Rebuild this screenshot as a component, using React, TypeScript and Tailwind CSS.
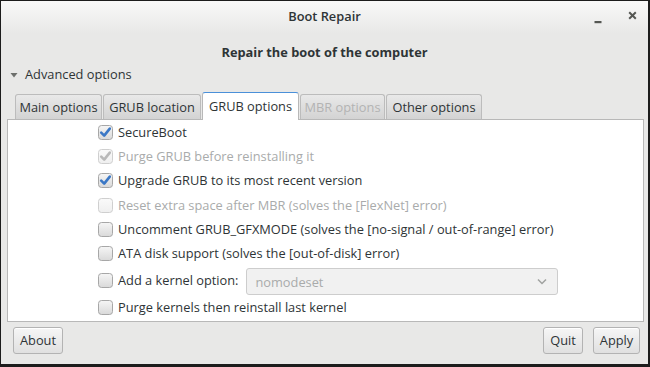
import React from "react";

const font = { fontFamily: '"Open Sans", "Noto Sans", sans-serif' };

function Check({ checked, disabled }: { checked?: boolean; disabled?: boolean }) {
  const id = disabled ? "gd" : "gn";
  return (
    <svg width="15" height="15" viewBox="0 0 15 15" className="shrink-0">
      <defs>
        <linearGradient id={id} x1="0" y1="0" x2="0" y2="1">
          <stop offset="0" stopColor={disabled ? "#fafafa" : "#f6f6f6"} />
          <stop offset="1" stopColor={disabled ? "#efefef" : "#d9d9d9"} />
        </linearGradient>
      </defs>
      <rect x="0.5" y="0.5" width="14" height="14" rx="3" fill={`url(#${id})`} stroke={disabled ? "#cfcfcf" : "#a7a7a7"} />
      {checked && (
        <path
          d="M3.2 7.6 L6.2 10.6 L11.8 3.6"
          fill="none"
          stroke={disabled ? "#b9b9b9" : "#3b78c6"}
          strokeWidth="2.6"
          strokeLinecap="round"
          strokeLinejoin="round"
        />
      )}
    </svg>
  );
}

function Row({ label, checked, disabled, h = "h-[24.4px]" }: { label: string; checked?: boolean; disabled?: boolean; h?: string }) {
  return (
    <div className={`flex items-center gap-[5px] ${h}`}>
      <Check checked={checked} disabled={disabled} />
      <span className={disabled ? "text-[#a9abab]" : "text-[#2e3436]"}>{label}</span>
    </div>
  );
}

function Tab({ label, w, active, disabled }: { label: string; w: string; active?: boolean; disabled?: boolean }) {
  if (active) {
    return (
      <div className={`${w} h-[28px] -mb-px relative z-10 flex items-center justify-center bg-white border border-b-0 border-[#b8b8b8] border-t-[#4a90d9] rounded-t-[3px] text-[#2e3436]`}>
        {label}
      </div>
    );
  }
  return (
    <div
      className={`${w} h-[25px] flex items-center justify-center border border-b-0 border-[#bcbcbc] rounded-t-[3px] bg-gradient-to-b from-[#e9e9e9] to-[#d3d3d3] ${disabled ? "text-[#b3b3b3]" : "text-[#2e3436]"}`}
    >
      {label}
    </div>
  );
}

function Button({ label, w }: { label: string; w: string }) {
  return (
    <div className={`${w} h-[27px] flex items-center justify-center rounded-[3px] border border-[#b3b3b3] bg-gradient-to-b from-[#f6f6f6] to-[#e0e0e0] text-[#2e3436] shadow-[inset_0_1px_0_#ffffff]`}>
      {label}
    </div>
  );
}

export default function App() {
  return (
    <div className="w-[650px] h-[367px] bg-[#1c1c1c] pt-px pl-px pr-[2px] pb-[3px] text-[12.8px] leading-[17px]" style={font}>
      <div className="w-full h-full flex flex-col bg-[#e8e8e7]">
        {/* Title bar */}
        <div className="h-[33px] shrink-0 grid grid-cols-[1fr_auto_1fr] items-center bg-gradient-to-b from-[#f8f8f8] to-[#e8e8e7]">
          <div />
          <div className="font-semibold text-[#2e3436] -mt-[2px]">Boot Repair</div>
          <div className="flex justify-end items-center gap-[26px] pr-[11px]">
            <svg width="8" height="8" viewBox="0 0 8 8" className="mt-[5px]">
              <rect x="0.5" y="5" width="7" height="2.2" fill="#555753" />
            </svg>
            <svg width="9" height="9" viewBox="0 0 9 9" className="-mt-[4px]">
              <path d="M1.2 1.2 L7.8 7.8 M7.8 1.2 L1.2 7.8" stroke="#555753" strokeWidth="2" />
            </svg>
          </div>
        </div>

        {/* Heading */}
        <div className="text-center font-bold text-[#2e3436] mt-[10px] h-[17px]">Repair the boot of the computer</div>

        {/* Expander */}
        <div className="flex items-center gap-[7px] pl-[9px] mt-[5px] h-[17px] text-[#2e3436]">
          <svg width="8" height="8" viewBox="0 0 8 8">
            <path d="M0.5 2 L7.5 2 L4 6.5 Z" fill="#6d6f6c" />
          </svg>
          <span>Advanced options</span>
        </div>

        {/* Notebook */}
        <div className="ml-[6px] mr-[4px] mt-[8px] flex flex-col">
          <div className="flex items-end pl-[8px] gap-px h-[28px]">
            <Tab label="Main options" w="w-[87px]" />
            <Tab label="GRUB location" w="w-[98px]" />
            <Tab label="GRUB options" w="w-[97px]" active />
            <Tab label="MBR options" w="w-[85px]" disabled />
            <Tab label="Other options" w="w-[96px]" />
          </div>
          <div className="h-[203px] bg-white border border-[#b8b8b8] pl-[90px] pr-[85px] flex flex-col">
            <Row label="SecureBoot" checked />
            <Row label="Purge GRUB before reinstalling it" checked disabled />
            <Row label="Upgrade GRUB to its most recent version" checked />
            <Row label="Reset extra space after MBR (solves the [FlexNet] error)" disabled />
            <Row label="Uncomment GRUB_GFXMODE (solves the [no-signal / out-of-range] error)" />
            <Row label="ATA disk support (solves the [out-of-disk] error)" />
            <div className="flex items-center gap-[5px] h-[29px]">
              <Check />
              <span className="text-[#2e3436] whitespace-nowrap">Add a kernel option:</span>
              <div className="ml-[3px] flex-1 h-[27px] mt-px flex items-center justify-between rounded-[3px] border border-[#cdcdcd] bg-[#f1f1f1] pl-[8px] pr-[10px] text-[#a9abab]">
                <span className="mt-[3px]">nomodeset</span>
                <svg width="10" height="7" viewBox="0 0 10 7">
                  <path d="M1 1.5 L5 5.5 L9 1.5" fill="none" stroke="#a0a2a0" strokeWidth="1.5" />
                </svg>
              </div>
            </div>
            <Row label="Purge kernels then reinstall last kernel" h="h-[26px]" />
          </div>
        </div>

        {/* Buttons */}
        <div className="flex items-center mt-[5px] pl-[12px] pr-[8px]">
          <Button label="About" w="w-[50px]" />
          <div className="flex-1" />
          <div className="flex gap-[10px]">
            <Button label="Quit" w="w-[40px]" />
            <Button label="Apply" w="w-[47px]" />
          </div>
        </div>
      </div>
    </div>
  );
}
